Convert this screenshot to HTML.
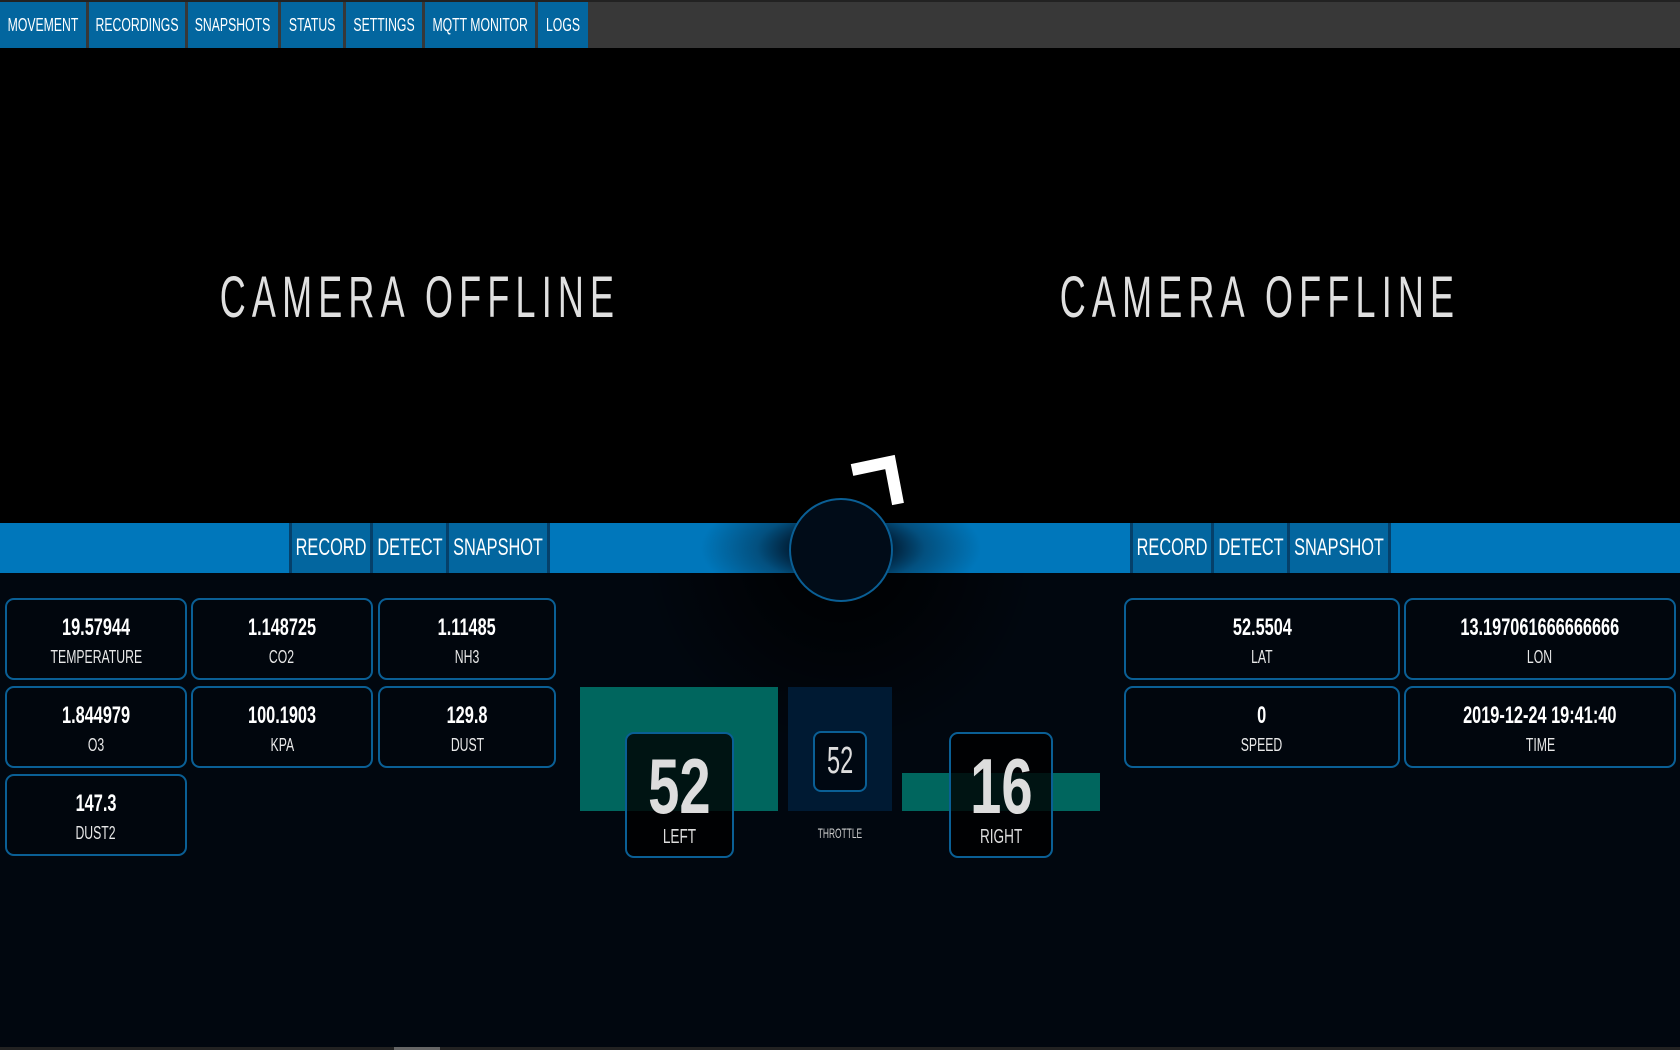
<!DOCTYPE html>
<html><head><meta charset="utf-8"><style>
*{margin:0;padding:0;box-sizing:border-box}
body{width:1680px;height:1050px;overflow:hidden;background:#01070f;font-family:"Liberation Sans",sans-serif;color:#fff;position:relative}
.a{position:absolute}
.c{display:inline-block;white-space:nowrap;transform:scaleX(.68);transform-origin:center}
.f{display:flex;justify-content:center;align-items:center}
.nav{left:0;top:0;width:1680px;height:48px;background:#383838;border-top:2px solid #222}
.ni{position:absolute;top:2px;height:46px;background:#03669f;color:#fff;font-size:18px}
.cam{top:0;height:523px;background:#000}
.off{top:262px;height:70px;font-size:58px;letter-spacing:10px;color:#e0e0e0;width:840px}
.off .c{transform:scaleX(.62)}
.bar{left:0;top:523px;width:1680px;height:50px;background:#0077bb}
.btn{position:absolute;top:523px;height:50px;background:#03669f;color:#fff;font-size:24px;border-left:3px solid #05406a;border-right:3px solid #05406a}
.card{position:absolute;border:2px solid #0a5f95;border-radius:9px;background:#01060d;flex-direction:column;justify-content:flex-start}
.card b{display:block;font-size:24px;margin-top:14px;line-height:28px}
.card span{display:block;font-size:18px;margin-top:5px;color:#e8e8e8;font-weight:normal}
</style></head><body>
<div class="a cam" style="left:0;width:1680px"></div>
<div class="a nav"></div>
<div class="ni f" style="left:0;width:86px"><span class="c">MOVEMENT</span></div>
<div class="ni f" style="left:89px;width:96px"><span class="c">RECORDINGS</span></div>
<div class="ni f" style="left:188px;width:90px"><span class="c">SNAPSHOTS</span></div>
<div class="ni f" style="left:281px;width:62px"><span class="c">STATUS</span></div>
<div class="ni f" style="left:346px;width:76px"><span class="c">SETTINGS</span></div>
<div class="ni f" style="left:425px;width:110px"><span class="c">MQTT MONITOR</span></div>
<div class="ni f" style="left:538px;width:50px"><span class="c">LOGS</span></div>
<div class="a off f" style="left:0"><span class="c">CAMERA OFFLINE</span></div>
<div class="a off f" style="left:840px"><span class="c">CAMERA OFFLINE</span></div>
<div class="a" style="left:641px;top:350px;width:400px;height:400px;border-radius:50%;background:radial-gradient(circle,rgba(0,0,0,.9) 0%,rgba(0,0,0,.6) 30%,rgba(0,0,0,0) 70%)"></div>
<div class="a bar"></div>
<div class="a" style="left:700px;top:523px;width:282px;height:50px;background:radial-gradient(ellipse 140px 60px at 50% 50%,#001428 30%,#03507f 60%,rgba(0,119,187,0) 100%)"></div>
<div class="btn f" style="left:289px;width:84px"><span class="c">RECORD</span></div>
<div class="btn f" style="left:370px;width:79px"><span class="c">DETECT</span></div>
<div class="btn f" style="left:446px;width:104px"><span class="c">SNAPSHOT</span></div>
<div class="btn f" style="left:1130px;width:84px"><span class="c">RECORD</span></div>
<div class="btn f" style="left:1211px;width:79px"><span class="c">DETECT</span></div>
<div class="btn f" style="left:1287px;width:104px"><span class="c">SNAPSHOT</span></div>
<div class="a" style="left:789px;top:498px;width:104px;height:104px;border-radius:50%;background:#010c18;border:2px solid #0a5f95"></div>
<svg class="a" style="left:840px;top:450px" width="80" height="70"><path d="M12 20 L50 12 L58 54" fill="none" stroke="#fff" stroke-width="12" stroke-linejoin="miter"/></svg>

<div class="card f" style="left:5px;top:598px;width:182px;height:82px"><b class="c">19.57944</b><span class="c">TEMPERATURE</span></div>
<div class="card f" style="left:191px;top:598px;width:182px;height:82px"><b class="c">1.148725</b><span class="c">CO2</span></div>
<div class="card f" style="left:378px;top:598px;width:178px;height:82px"><b class="c">1.11485</b><span class="c">NH3</span></div>
<div class="card f" style="left:5px;top:686px;width:182px;height:82px"><b class="c">1.844979</b><span class="c">O3</span></div>
<div class="card f" style="left:191px;top:686px;width:182px;height:82px"><b class="c">100.1903</b><span class="c">KPA</span></div>
<div class="card f" style="left:378px;top:686px;width:178px;height:82px"><b class="c">129.8</b><span class="c">DUST</span></div>
<div class="card f" style="left:5px;top:774px;width:182px;height:82px"><b class="c">147.3</b><span class="c">DUST2</span></div>

<div class="card f" style="left:1124px;top:598px;width:276px;height:82px"><b class="c">52.5504</b><span class="c">LAT</span></div>
<div class="card f" style="left:1404px;top:598px;width:272px;height:82px"><b class="c">13.197061666666666</b><span class="c">LON</span></div>
<div class="card f" style="left:1124px;top:686px;width:276px;height:82px"><b class="c">0</b><span class="c">SPEED</span></div>
<div class="card f" style="left:1404px;top:686px;width:272px;height:82px"><b class="c">2019-12-24 19:41:40</b><span class="c">TIME</span></div>

<div class="a" style="left:580px;top:687px;width:198px;height:124px;background:#00665e"></div>
<div class="a" style="left:788px;top:687px;width:104px;height:124px;background:#001a33"></div>
<div class="a" style="left:902px;top:773px;width:198px;height:38px;background:#00665e"></div>
<div class="a f" style="left:625px;top:732px;width:109px;height:126px;border:2px solid #0a5f95;border-radius:9px;background:rgba(0,0,0,.8);flex-direction:column;justify-content:flex-start"><div class="c" style="font-size:78px;font-weight:bold;color:#ddd;line-height:72px;margin-top:16px;transform:scaleX(.72)">52</div><div class="c" style="font-size:20px;color:#ddd;margin-top:4px">LEFT</div></div>
<div class="a f" style="left:949px;top:732px;width:104px;height:126px;border:2px solid #0a5f95;border-radius:9px;background:rgba(0,0,0,.8);flex-direction:column;justify-content:flex-start"><div class="c" style="font-size:78px;font-weight:bold;color:#ddd;line-height:72px;margin-top:16px;transform:scaleX(.72)">16</div><div class="c" style="font-size:20px;color:#ddd;margin-top:4px">RIGHT</div></div>
<div class="a f" style="left:813px;top:731px;width:54px;height:61px;border:2px solid #0a5f95;border-radius:8px;background:#000812;font-size:38px;color:#ddd"><span class="c" style="transform:scaleX(.62)">52</span></div>
<div class="a f" style="left:788px;top:825px;width:104px;font-size:14px;color:#ccc"><span class="c" style="transform:scaleX(.6)">THROTTLE</span></div>
<div class="a" style="left:0;top:1047px;width:1680px;height:3px;background:#222"></div>
<div class="a" style="left:394px;top:1047px;width:46px;height:3px;background:#666"></div>
</body></html>
